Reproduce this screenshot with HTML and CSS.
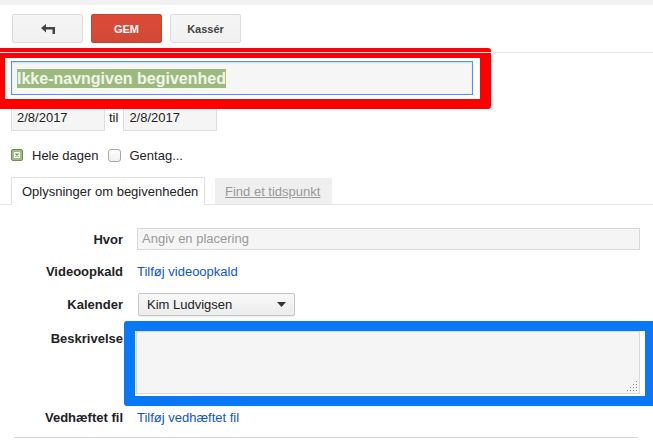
FILE: index.html
```html
<!DOCTYPE html>
<html lang="da">
<head>
<meta charset="utf-8">
<title>Begivenhed</title>
<link rel="stylesheet" href="styles.css">
</head>
<body>
<div class="topstrip"></div>

<div class="toolbar">
  <button class="btn btn-back" aria-label="Tilbage">
    <svg width="14" height="10" viewBox="0 0 14 10">
      <path d="M0 4 L5 0 L5 3 L14 3 L14 10 L11.5 10 L11.5 5.5 L5 5.5 L5 8.5 Z" fill="#444"/>
    </svg>
  </button>
  <button class="btn btn-primary">GEM</button>
  <button class="btn">Kassér</button>
</div>
<div class="rule"></div>

<div class="title-row">
  <div class="title-input mark-red"><span class="selected">Ikke-navngiven begivenhed</span></div>
</div>

<div class="dates">
  <div class="date-input">2/8/2017</div>
  <span class="til">til</span>
  <div class="date-input">2/8/2017</div>
</div>

<div class="checks">
  <span class="cb cb-on">
    <svg width="6" height="6" viewBox="0 0 6 6">
      <rect x="0" y="0" width="6" height="6" fill="#fff"/>
      <path d="M1.5 1.5 L4.5 4.5 M4.5 1.5 L1.5 4.5" stroke="#6d8a57" stroke-width="1.2"/>
    </svg>
  </span>
  <span class="cb-label">Hele dagen</span>
  <span class="cb cb-off"></span>
  <span class="cb-label">Gentag...</span>
</div>

<div class="tabs">
  <div class="tab tab-active">Oplysninger om begivenheden</div>
  <div class="tab tab-idle"><span class="tab-link">Find et tidspunkt</span></div>
</div>

<div class="form">
  <div class="row row-where">
    <div class="label">Hvor</div>
    <div class="field"><div class="text-input placeholder">Angiv en placering</div></div>
  </div>
  <div class="row row-video">
    <div class="label">Videoopkald</div>
    <div class="field"><a class="link" href="#">Tilføj videoopkald</a></div>
  </div>
  <div class="row row-cal">
    <div class="label">Kalender</div>
    <div class="field">
      <div class="select">
        <span>Kim Ludvigsen</span>
        <svg width="9" height="5" viewBox="0 0 9 5"><path d="M0 0 L9 0 L4.5 5 Z" fill="#333"/></svg>
      </div>
    </div>
  </div>
  <div class="row row-desc">
    <div class="label">Beskrivelse</div>
    <div class="field">
      <div class="textarea mark-blue">
        <svg class="grip" width="10" height="10" viewBox="0 0 10 10" fill="#888">
          <rect x="9" y="0" width="1" height="1"/>
          <rect x="6" y="3" width="1" height="1"/><rect x="9" y="3" width="1" height="1"/>
          <rect x="3" y="6" width="1" height="1"/><rect x="6" y="6" width="1" height="1"/><rect x="9" y="6" width="1" height="1"/>
          <rect x="0" y="9" width="1" height="1"/><rect x="3" y="9" width="1" height="1"/><rect x="6" y="9" width="1" height="1"/><rect x="9" y="9" width="1" height="1"/>
        </svg>
      </div>
    </div>
  </div>
  <div class="row row-file">
    <div class="label">Vedhæftet fil</div>
    <div class="field"><a class="link" href="#">Tilføj vedhæftet fil</a></div>
  </div>
  <div class="bottom-rule"></div>
</div>
</body>
</html>
```

FILE: styles.css
```css
* { box-sizing: border-box; }

html, body {
  margin: 0;
  padding: 0;
  background: #fff;
  overflow: hidden;
}

body {
  font-family: "Liberation Sans", Arial, sans-serif;
  font-size: 13px;
  color: #222;
  width: 653px;
  height: 442px;
}

.topstrip {
  height: 5px;
  background: #f1f1f1;
}

/* toolbar */
.toolbar {
  display: flex;
  gap: 8px;
  padding: 9px 0 0 12px;
  height: 47px;
}

.btn {
  width: 71px;
  height: 29px;
  border: 1px solid #dcdcdc;
  border-radius: 2px;
  background: linear-gradient(#f5f5f5, #f1f1f1);
  font-family: "Liberation Sans", Arial, sans-serif;
  font-size: 11px;
  font-weight: bold;
  color: #444;
  padding: 0;
  display: flex;
  align-items: center;
  justify-content: center;
}

.btn-back svg { display: block; margin-left: 1px; }

.btn-primary {
  background: linear-gradient(#dd4b39, #d14836);
  border-color: #c6422f;
  color: #fff;
}

.rule {
  height: 1px;
  background: #e5e5e5;
  position: relative;
  z-index: 2;
}

/* title */
.title-row {
  padding: 8px 0 0 11px;
}

.title-input {
  position: relative;
  width: 462px;
  height: 34px;
  border: 1px solid #4d90fe;
  background: #f6f6f6;
  box-shadow: inset 0 1px 2px rgba(0, 0, 0, 0.12);
  padding: 7px 0 0 5px;
  font-size: 16px;
  font-weight: bold;
  line-height: 19px;
}

.selected {
  background: #9cba7e;
  color: #f3f5ec;
  padding: 1px 0;
}

.mark-red::before {
  content: "";
  position: absolute;
  left: -17px;
  top: -14px;
  right: -19px;
  bottom: -15px;
  border: 10px solid #ff0000;
  border-right-width: 11px;
  border-radius: 3px;
}

/* dates */
.dates {
  display: flex;
  align-items: center;
  padding: 9px 0 0 11px;
}

.date-input {
  width: 94px;
  height: 27px;
  border: 1px solid #dddddd;
  background: #f5f5f5;
  padding: 0 0 0 5px;
  line-height: 25px;
  font-size: 13px;
}

.til {
  margin: 0 5px 0 4px;
}

/* checkboxes */
.checks {
  display: flex;
  align-items: center;
  height: 18px;
  margin-top: 15px;
  padding-left: 11px;
}

.cb {
  width: 12px;
  height: 12px;
  display: flex;
  align-items: center;
  justify-content: center;
}

.cb svg { display: block; }

.cb-on {
  background: #9cbf80;
  border: 1px solid #6e8c57;
  border-radius: 2px;
}

.cb-off {
  width: 13px;
  height: 13px;
  border: 1px solid #a8a8a8;
  border-radius: 3px;
  background: linear-gradient(#fdfdfd, #f0f0f0);
}

.cb-label {
  margin: 0 9px 0 9px;
}

/* tabs */
.tabs {
  display: flex;
  align-items: flex-end;
  margin-top: 14px;
  height: 27px;
  padding-left: 11px;
  border-bottom: 1px solid #e5e5e5;
}

.tab {
  height: 27px;
  display: flex;
  align-items: center;
}

.tab-active {
  width: 194px;
  background: #fff;
  border: 1px solid #e0e0e0;
  border-bottom: none;
  padding-left: 10px;
  margin-bottom: -1px;
  height: 28px;
}

.tab-idle {
  width: 117px;
  margin-left: 10px;
  background: #efefef;
  height: 26px;
  padding-left: 10px;
}

.tab-link {
  color: #999;
  text-decoration: underline;
}

/* form */
.form {
  padding-top: 23px;
}

.row {
  display: flex;
  align-items: center;
}

.label {
  width: 123px;
  text-align: right;
  font-weight: bold;
  color: #222;
  flex: none;
}

.field {
  margin-left: 14px;
}

.text-input {
  width: 503px;
  height: 22px;
  border: 1px solid #d9d9d9;
  background: #f5f5f5;
  padding-left: 4px;
  line-height: 20px;
}

.placeholder { color: #999; }

.row-video {
  height: 22px;
  margin-top: 10px;
}

.link {
  color: #1155cc;
  text-decoration: none;
}

.row-cal {
  margin-top: 11px;
}

.select {
  margin-left: 1px;
  width: 157px;
  height: 23px;
  border: 1px solid #c6c6c6;
  border-radius: 2px;
  background: linear-gradient(#f8f8f8, #ececec);
  box-shadow: 0 1px 1px rgba(0, 0, 0, 0.08);
  display: flex;
  align-items: center;
  justify-content: space-between;
  padding: 0 8px 0 8px;
}

.row-desc {
  align-items: flex-start;
  margin-top: 15px;
}

.row-desc .label {
  line-height: 15px;
  padding-top: 0;
}

.row-desc .field {
  margin-left: 13px;
}

.textarea {
  position: relative;
  width: 504px;
  height: 63px;
  border: 1px solid #d9d9d9;
  background: #f5f5f5;
}

.grip {
  position: absolute;
  right: 2px;
  bottom: 2px;
}

.mark-blue::before {
  content: "";
  position: absolute;
  left: -13px;
  top: -11px;
  right: -17px;
  bottom: -13px;
  border: 11px solid #0878f6;
  border-top-width: 10px;
  border-bottom-width: 10px;
  border-radius: 3px;
}

.row-file {
  height: 22px;
  margin-top: 12px;
}

.bottom-rule {
  margin: 9px 15px 0 14px;
  height: 1px;
  background: #d6d6d6;
}
```
